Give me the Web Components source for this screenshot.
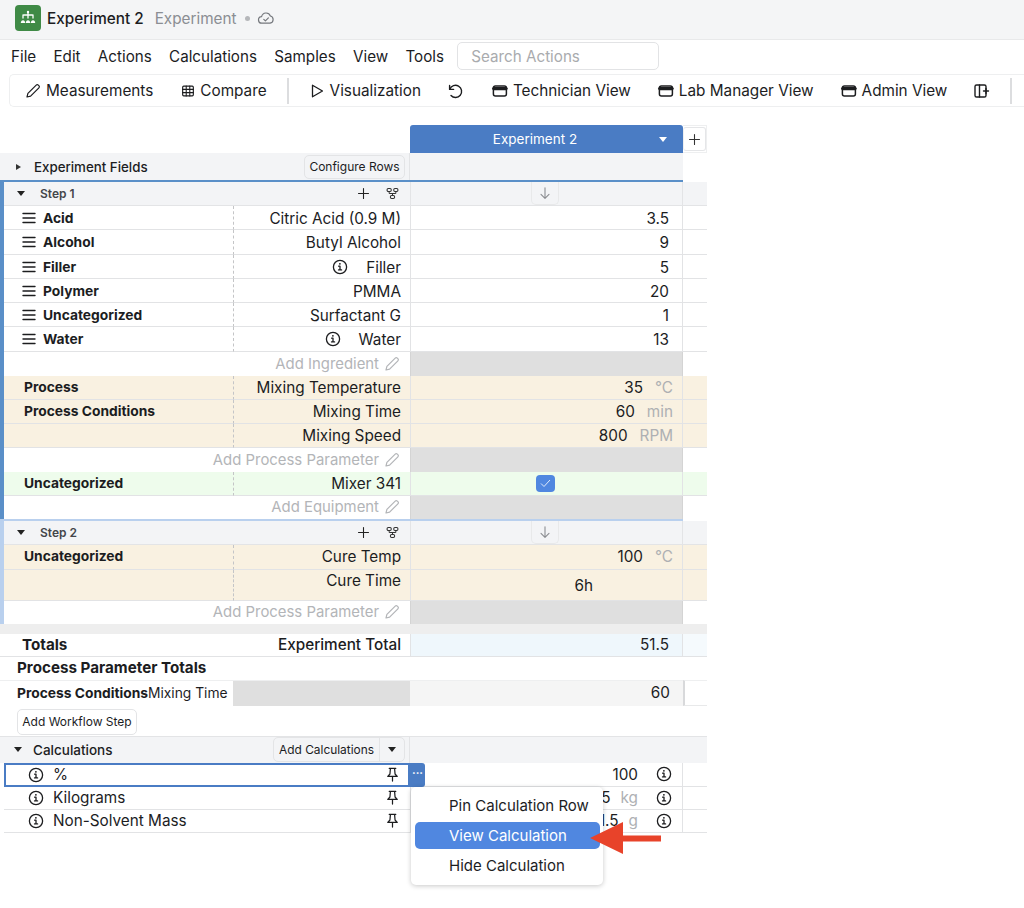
<!DOCTYPE html>
<html>
<head>
<meta charset="utf-8">
<title>Experiment 2</title>
<style>
  html, body { margin: 0; background: #fff; }
  body { font-family: Inter, "Liberation Sans", sans-serif; font-size: 15.3px; color: #1c1d1f; width: 1024px; height: 908px; overflow: hidden; }
  b { font-weight: 700; }
  .lbl { font-size: 13.8px; font-weight: 700; display: flex; align-items: center; }
  .val { display: flex; align-items: center; }
  .unit { color: #aeb0b3; margin-left: 12px; }
</style>
</head>
<body>
<app-header></app-header>
<menu-bar></menu-bar>
<tool-bar></tool-bar>
<sheet-view>
  <column-head></column-head>
  <fields-row></fields-row>

  <step-block color="#5a8fc8" line="#5a8fc8">
    <step-head label="Step 1" h="23"></step-head>
    <sheet-row h="24" nudge><span slot="a" class="lbl"><x-icon name="menu"></x-icon>Acid</span><span slot="b">Citric Acid (0.9 M)</span><span slot="c">3.5</span></sheet-row>
    <sheet-row h="25"><span slot="a" class="lbl"><x-icon name="menu"></x-icon>Alcohol</span><span slot="b">Butyl Alcohol</span><span slot="c">9</span></sheet-row>
    <sheet-row h="24" nudge><span slot="a" class="lbl"><x-icon name="menu"></x-icon>Filler</span><span slot="b" class="val"><x-icon name="info" gap="17"></x-icon>Filler</span><span slot="c">5</span></sheet-row>
    <sheet-row h="24" nudge><span slot="a" class="lbl"><x-icon name="menu"></x-icon>Polymer</span><span slot="b">PMMA</span><span slot="c">20</span></sheet-row>
    <sheet-row h="24" nudge><span slot="a" class="lbl"><x-icon name="menu"></x-icon>Uncategorized</span><span slot="b">Surfactant G</span><span slot="c">1</span></sheet-row>
    <sheet-row h="25"><span slot="a" class="lbl"><x-icon name="menu"></x-icon>Water</span><span slot="b" class="val"><x-icon name="info" gap="17"></x-icon>Water</span><span slot="c">13</span></sheet-row>
    <add-row label="Add Ingredient"></add-row>
    <sheet-row tone="process"><span slot="a" class="lbl">Process</span><span slot="b">Mixing Temperature</span><span slot="c">35<span class="unit">°C</span></span></sheet-row>
    <sheet-row tone="process"><span slot="a" class="lbl">Process Conditions</span><span slot="b">Mixing Time</span><span slot="c">60<span class="unit">min</span></span></sheet-row>
    <sheet-row tone="process"><span slot="b">Mixing Speed</span><span slot="c">800<span class="unit">RPM</span></span></sheet-row>
    <add-row label="Add Process Parameter"></add-row>
    <sheet-row tone="equip" h="23.5"><span slot="a" class="lbl">Uncategorized</span><span slot="b">Mixer 341</span><check-box slot="c"></check-box></sheet-row>
    <add-row label="Add Equipment" h="23"></add-row>
  </step-block>

  <step-block color="#b9d0ee" line="#b9d0ee">
    <step-head label="Step 2" h="23"></step-head>
    <sheet-row tone="process" h="25"><span slot="a" class="lbl">Uncategorized</span><span slot="b">Cure Temp</span><span slot="c">100<span class="unit">°C</span></span></sheet-row>
    <sheet-row tone="process" h="31" top><span slot="b">Cure Time</span><span slot="c" style="margin-right:80px;padding-top:2px">6h</span></sheet-row>
    <add-row label="Add Process Parameter" h="23"></add-row>
  </step-block>

  <totals-part></totals-part>

  <calc-head></calc-head>
  <calc-row label="%" value="100" active></calc-row>
  <calc-row label="Kilograms" value="5" unit="kg"></calc-row>
  <calc-row label="Non-Solvent Mass" value="1.5" unit="g"></calc-row>

  <pop-menu></pop-menu>
  <red-arrow></red-arrow>
</sheet-view>

<script>
const ICONS = {
  menu: '<path d="M3 4.5h12M3 9h12M3 13.5h12" stroke-width="1.4"/>',
  info: '<circle cx="9" cy="9" r="6.6" stroke-width="1.3"/><path d="M7.6 8.2H9v3.6M7.5 11.9h3.1" stroke-width="1.3"/><circle cx="8.9" cy="5.8" r=".9" fill="currentColor" stroke="none"/>',
  pencil: '<path d="M3 15l.9-3.6 8.3-8.3a1.5 1.5 0 0 1 2.1 0l.6.6a1.5 1.5 0 0 1 0 2.1l-8.3 8.3z" stroke-width="1.2"/>',
  table: '<rect x="3" y="3.5" width="12" height="11" rx="1.2" stroke-width="1.3"/><path d="M3 7.2h12M3 10.8h12M7 3.5v11M11 3.5v11" stroke-width="1.2"/>',
  play: '<path d="M4.5 3.2L14.5 9 4.5 14.8z" stroke-width="1.3"/>',
  undo: '<path d="M3.6 3.4v4h4" stroke-width="1.4"/><path d="M3.8 7.2A6.1 6.1 0 1 1 5 13.5" stroke-width="1.4"/>',
  view: '<rect x="2.4" y="4" width="13" height="10" rx="2" stroke-width="1.5"/><path d="M2.8 6.6h12.2" stroke-width="3.4"/>',
  panel: '<rect x="2" y="3" width="11" height="12" rx="1.6" stroke-width="1.4"/><path d="M6.5 3v12" stroke-width="1.4"/><path d="M10.5 9h5M13 6.500v5" stroke-width="1.4"/>',
  plus: '<path d="M9 3v12M3 9h12" stroke-width="1.3"/>',
  down: '<path d="M9 3v12M4.5 10.5L9 15l4.500-4.500" stroke-width="1.2"/>',
  nodes: '<rect x="2.5" y="3" width="5" height="3.6" rx="1.4" stroke-width="1.3"/><rect x="10.5" y="3" width="5" height="3.6" rx="1.4" stroke-width="1.3"/><rect x="6.5" y="11.4" width="5" height="3.6" rx="1.4" stroke-width="1.3"/><path d="M5 6.6v2.4h8V6.6M9 9v2.4" stroke-width="1.2"/>',
  pin: '<path d="M5.500 2.500h7M6.800 2.500l-.5 6-2.300 2.600h10l-2.300-2.600-.5-6M9 11.200V16" stroke-width="1.3"/>',
  cloud: '<path d="M5 14.2a3.3 3.3 0 0 1-.4-6.6 4.6 4.6 0 0 1 8.800-.6 3.700 3.700 0 0 1-.3 7.200z" stroke-width="1.2"/><path d="M6.800 10.400l1.600 1.500 3-3" stroke-width="1.2"/>',
  flow: '<path d="M5 6h8M9 3v3M4 6v3M14 6v3M9 6v3" stroke-width="1.3"/><path d="M2.400 13.500a1.700 2.600 0 0 1 3.200 0zM7.400 13.500a1.700 2.600 0 0 1 3.200 0zM12.400 13.500a1.700 2.600 0 0 1 3.200 0z" stroke-width="1.2" fill="currentColor"/><circle cx="9" cy="3" r="1.2" fill="currentColor" stroke="none"/>'
};

class XIcon extends HTMLElement {
  connectedCallback() {
    const name = this.getAttribute('name');
    const size = this.getAttribute('size') || 18;
    const gap = this.getAttribute('gap') || (name === 'menu' ? 5 : 0);
    this.attachShadow({ mode: 'open' }).innerHTML = `
      <style>
        :host { display: inline-flex; vertical-align: middle; margin-right: ${gap}px; }
        svg { display: block; fill: none; stroke: currentColor; stroke-linecap: round; stroke-linejoin: round; }
      </style>
      <svg width="${size}" height="${size}" viewBox="0 0 18 18">${ICONS[name]}</svg>`;
  }
}
customElements.define('x-icon', XIcon);

class AppHeader extends HTMLElement {
  constructor() {
    super();
    this.attachShadow({ mode: 'open' }).innerHTML = `
      <style>
        :host { display: flex; align-items: center; height: 36px; padding: 0 0 3px 15px; background: #f4f5f6; border-bottom: 1px solid #e8e9ea; font-size: 15.3px; }
        .logo { width: 26px; height: 26px; border-radius: 4px; background: #3f8a46; color: #fff; display: flex; align-items: center; justify-content: center; margin-right: 6px; }
        .name { font-weight: 500; color: #1c1d1f; margin-right: 11px; }
        .type { color: #8b8e93; }
        .dot { width: 5px; height: 5px; border-radius: 50%; background: #b5b7ba; margin: 0 7px 0 8px; }
        .cloud { color: #75787d; display: flex; }
      </style>
      <div class="logo"><x-icon name="flow" size="18"></x-icon></div>
      <span class="name">Experiment 2</span>
      <span class="type">Experiment</span>
      <span class="dot"></span>
      <span class="cloud"><x-icon name="cloud" size="18"></x-icon></span>`;
  }
}
customElements.define('app-header', AppHeader);

class MenuBar extends HTMLElement {
  constructor() {
    super();
    const items = ['File', 'Edit', 'Actions', 'Calculations', 'Samples', 'View', 'Tools'];
    this.attachShadow({ mode: 'open' }).innerHTML = `
      <style>
        :host { display: flex; align-items: center; height: 32px; padding: 0 0 2px 11px; gap: 17.3px; font-size: 15.2px; }
        .search { width: 187px; height: 26px; margin-left: -4px; border: 1px solid #e2e3e5; border-radius: 5px; padding-left: 13px; display: flex; align-items: center; color: #a9abae; }
      </style>
      ${items.map(i => `<span>${i}</span>`).join('')}
      <div class="search">Search Actions</div>`;
  }
}
customElements.define('menu-bar', MenuBar);

class ToolBar extends HTMLElement {
  constructor() {
    super();
    const btn = (icon, text, gap) => `<span class="btn" style="margin-right:${gap}px"><x-icon name="${icon}" size="${icon === 'table' ? 16 : 18}"></x-icon>${text ? `<span>${text}</span>` : ''}</span>`;
    this.attachShadow({ mode: 'open' }).innerHTML = `
      <style>
        :host { display: flex; align-items: center; height: 31px; margin-left: 9px; padding-left: 14px; border: 1px solid #eeeff0; border-right: 0; border-radius: 5px 0 0 5px; font-size: 15.3px; white-space: nowrap; overflow: hidden; }
        .btn { display: inline-flex; align-items: center; gap: 4px; }
        .sep { width: 2px; height: 26px; background: #dcdddf; flex: none; }
      </style>
      ${btn('pencil', 'Measurements', 27)}
      ${btn('table', 'Compare', 20)}
      <span class="sep" style="margin-right:19px"></span>
      ${btn('play', 'Visualization', 25)}
      ${btn('undo', '', 27)}
      ${btn('view', 'Technician View', 26)}
      ${btn('view', 'Lab Manager View', 26)}
      ${btn('view', 'Admin View', 26)}
      ${btn('panel', '', 19)}
      <span class="sep"></span>`;
  }
}
customElements.define('tool-bar', ToolBar);

class SheetView extends HTMLElement {
  constructor() {
    super();
    this.attachShadow({ mode: 'open' }).innerHTML = `
      <style>:host { display: block; position: relative; width: 707px; margin-top: 18px; }</style>
      <slot></slot>`;
  }
}
customElements.define('sheet-view', SheetView);

class ColumnHead extends HTMLElement {
  constructor() {
    super();
    this.attachShadow({ mode: 'open' }).innerHTML = `
      <style>
        :host { display: flex; height: 28px; padding-left: 410px; }
        .main { width: 273px; background: #4a7cc4; color: #fff; border-radius: 3px 3px 0 0; display: flex; align-items: center; justify-content: center; font-size: 13.5px; position: relative; padding-right: 23px; box-sizing: border-box; }
        .caret { position: absolute; right: 16px; top: 12px; border: 4.5px solid transparent; border-top: 5px solid #fff; border-bottom: 0; }
        .wrap { width: 24px; box-sizing: border-box; border: 1px solid #eeeff0; border-left: 0; display: flex; align-items: center; }
        .add { width: 23px; height: 24px; background: #fff; box-sizing: border-box; border: 1px solid #e5e6e8; border-left-color: #eeeff0; display: flex; align-items: center; justify-content: center; border-radius: 3px; color: #333; }
      </style>
      <div class="main">Experiment 2<span class="caret"></span></div>
      <div class="wrap"><div class="add"><x-icon name="plus" size="15"></x-icon></div></div>`;
  }
}
customElements.define('column-head', ColumnHead);

class FieldsRow extends HTMLElement {
  constructor() {
    super();
    this.attachShadow({ mode: 'open' }).innerHTML = `
      <style>
        :host { display: flex; width: 683px; height: 27px; background: #f3f4f6; font-size: 13.3px; font-weight: 500; }
        .left { width: 410px; display: flex; align-items: center; padding-left: 16px; box-sizing: border-box; border-right: 1px solid #e3e4e6; }
        .tri { width: 0; height: 0; border: 3.5px solid transparent; border-left: 5px solid #333; border-right: 0; margin-right: 13px; }
        .cfg { margin-left: auto; margin-right: 4px; height: 24px; width: 101px; box-sizing: border-box; border: 1px solid #e3e4e6; border-radius: 5px; display: flex; align-items: center; justify-content: center; font-size: 12px; font-weight: 400; }
      </style>
      <div class="left"><span class="tri"></span>Experiment Fields<span class="cfg">Configure Rows</span></div>`;
  }
}
customElements.define('fields-row', FieldsRow);

class StepBlock extends HTMLElement {
  constructor() {
    super();
    this.attachShadow({ mode: 'open' }).innerHTML = `
      <style>
        :host { display: block; border-left: 4px solid ${this.getAttribute('color')}; position: relative; }
        .line { height: 2px; width: 679px; background: ${this.getAttribute('line')}; }
      </style>
      <div class="line"></div><slot></slot>`;
  }
}
customElements.define('step-block', StepBlock);

class StepHead extends HTMLElement {
  connectedCallback() {
    this.attachShadow({ mode: 'open' }).innerHTML = `
      <style>
        :host { display: grid; grid-template-columns: 406px 273px 24px; height: ${this.getAttribute('h') || 23}px; background: #f3f4f6; border-bottom: 1px solid #e3e4e6; }
        .left { display: flex; align-items: center; padding-left: 13px; font-size: 12px; font-weight: 600; color: #44464a; }
        .caret { border: 4.5px solid transparent; border-top: 5px solid #222; border-bottom: 0; margin-right: 15px; }
        .plus { margin-left: auto; color: #222; margin-right: 14px; display: flex; }
        .nodes { margin-right: 10px; color: #333; display: flex; }
        .mid { border-left: 1px solid #e3e4e6; border-right: 1px solid #e3e4e6; display: flex; justify-content: center; padding-right: 4px; }
        .arrow { width: 26px; border: 1px solid #e8e9ea; border-top: 0; border-radius: 0 0 5px 5px; color: #8a8c90; display: flex; align-items: center; justify-content: center; }
      </style>
      <div class="left"><span class="caret"></span>${this.getAttribute('label')}<span class="plus"><x-icon name="plus" size="15"></x-icon></span><span class="nodes"><x-icon name="nodes" size="15"></x-icon></span></div>
      <div class="mid"><span class="arrow"><x-icon name="down" size="16"></x-icon></span></div>
      <div></div>`;
  }
}
customElements.define('step-head', StepHead);

class SheetRow extends HTMLElement {
  connectedCallback() {
    const top = this.hasAttribute('top');
    this.attachShadow({ mode: 'open' }).innerHTML = `
      <style>
        :host { display: grid; grid-template-columns: 229px 177px 273px 24px; height: ${this.getAttribute('h') || 24}px; font-size: 15.3px; }
        :host([tone=process]) { background: #f9f1e1; }
        :host([tone=equip]) { background: #eefcec; }
        .cell { display: flex; align-items: ${top ? 'flex-start' : 'center'}; box-sizing: border-box; border-bottom: 1px solid #e2e3e5; white-space: nowrap; min-width: 0; ${top ? 'padding-top: 1px;' : ''} }
        .a { padding-left: 20px; }
        :host(:not([tone])) .a { padding-left: 16px; }
        :host([tone=process]) .a { padding-bottom: 1px; }
        .b { justify-content: flex-end; padding-right: 9px; border-left: 1px dashed #c4c5c7; }
        .c { justify-content: flex-end; padding-right: 13px; border-left: 1px solid #e2e3e5; border-right: 1px solid #e2e3e5; }
        :host([nudge]) .b, :host([nudge]) .c { padding-top: 1px; }
        :host([tone=equip]) .c { justify-content: center; padding: 0; }
        :host([tone=process]) .c { padding-right: 9px; }
        :host([top]) .c { align-items: center; padding-top: 0; }
      </style>
      <div class="cell a"><slot name="a"></slot></div>
      <div class="cell b"><slot name="b"></slot></div>
      <div class="cell c"><slot name="c"></slot></div>
      <div class="cell d"></div>`;
  }
}
customElements.define('sheet-row', SheetRow);

class AddRow extends HTMLElement {
  connectedCallback() {
    this.attachShadow({ mode: 'open' }).innerHTML = `
      <style>
        :host { display: grid; grid-template-columns: 406px 273px; height: ${this.getAttribute('h') || 24}px; font-size: 14.9px; color: #b3b5b8; }
        .l { display: flex; align-items: center; justify-content: flex-end; gap: 4px; padding-right: 9px; }
        .r { background: #dfdfdf; border-left: 1px solid #d4d4d4; border-right: 1px solid #d4d4d4; }
      </style>
      <div class="l">${this.getAttribute('label')}<x-icon name="pencil" size="18"></x-icon></div>
      <div class="r"></div>`;
  }
}
customElements.define('add-row', AddRow);

class CheckBox extends HTMLElement {
  constructor() {
    super();
    this.attachShadow({ mode: 'open' }).innerHTML = `
      <style>
        :host { display: flex; width: 19px; height: 17px; margin-right: 2px; background: #5087e0; border-radius: 4px; align-items: center; justify-content: center; }
        svg { fill: none; stroke: #dfeafb; stroke-width: 1; }
      </style>
      <svg width="11" height="9" viewBox="0 0 11 9"><path d="M1 4.500l3 3 6-6.500"/></svg>`;
  }
}
customElements.define('check-box', CheckBox);

class TotalsPart extends HTMLElement {
  constructor() {
    super();
    this.attachShadow({ mode: 'open' }).innerHTML = `
      <style>
        :host { display: block; }
        .gap { height: 10px; background: #eeeeee; }
        .row { display: grid; grid-template-columns: 410px 273px 24px; height: 22px; border-bottom: 1px solid #e2e3e5; font-size: 15.3px; font-weight: 500; }
        .row > div { display: flex; align-items: center; }
        .t { justify-content: space-between; padding: 0 9px 0 22px; }
        .t b { font-size: 15.2px; }
        .v { background: #eff7fc; border-left: 1px solid #e2e3e5; border-right: 1px solid #e2e3e5; justify-content: flex-end; padding-right: 13px; font-weight: 400; }
        .e { background: #f5fafd; }
        .h { height: 21px; padding: 0 0 2px 17px; font-size: 15.2px; font-weight: 700; display: flex; align-items: center; }
        .pc { display: grid; grid-template-columns: 233px 177px 273px 24px; height: 26px; }
        .pc > div { display: flex; align-items: center; box-sizing: border-box; border-top: 1px solid #eeeff0; padding-bottom: 1px; }
        .n { padding-left: 17px; font-size: 13.8px; white-space: nowrap; }
        .n b { font-weight: 700; }
        .g { background: #dfdfdf; }
        .w { background: #f5f5f5; justify-content: flex-end; padding-right: 13px; font-size: 15.3px; }
        .x { border-left: 2px solid #d8d9db; border-bottom: 1px solid #e8e9ea; }
        .add { height: 27px; padding: 3px 0 0 17px; display: flex; align-items: flex-start; }
        .add span { display: flex; align-items: center; justify-content: center; width: 120px; height: 26px; box-sizing: border-box; border: 1px solid #e3e4e6; border-radius: 5px; font-size: 12px; }
      </style>
      <div class="gap"></div>
      <div class="row"><div class="t"><b>Totals</b><span>Experiment Total</span></div><div class="v">51.5</div><div class="e"></div></div>
      <div class="h">Process Parameter Totals</div>
      <div class="pc"><div class="n"><b>Process Conditions</b>Mixing Time</div><div class="g"></div><div class="w">60</div><div class="x"></div></div>
      <div class="add"><span>Add Workflow Step</span></div>`;
  }
}
customElements.define('totals-part', TotalsPart);

class CalcHead extends HTMLElement {
  constructor() {
    super();
    this.attachShadow({ mode: 'open' }).innerHTML = `
      <style>
        :host { display: grid; grid-template-columns: 410px 297px; height: 27px; background: #f3f4f6; border-top: 1px solid #e3e4e6; box-sizing: border-box; font-size: 13.5px; font-weight: 500; }
        .l { display: flex; align-items: center; padding-left: 14px; border-right: 1px solid #e3e4e6; }
        .caret { border: 4.5px solid transparent; border-top: 5px solid #222; border-bottom: 0; margin-right: 11px; }
        .btn { margin-left: auto; margin-right: 4px; display: flex; height: 25px; box-sizing: border-box; border: 1px solid #e3e4e6; border-radius: 5px; font-size: 11.9px; font-weight: 400; align-items: center; }
        .btn span { padding: 0 5px; line-height: 23px; }
        .btn i { width: 24px; height: 23px; border-left: 1px solid #e3e4e6; display: flex; align-items: center; justify-content: center; }
        .btn i::after { content: ''; border: 4.5px solid transparent; border-top: 5px solid #222; border-bottom: 0; }
      </style>
      <div class="l"><span class="caret"></span>Calculations<span class="btn"><span>Add Calculations</span><i></i></span></div><div></div>`;
  }
}
customElements.define('calc-head', CalcHead);

class CalcRow extends HTMLElement {
  connectedCallback() {
    const unit = this.getAttribute('unit');
    const active = this.hasAttribute('active');
    this.attachShadow({ mode: 'open' }).innerHTML = `
      <style>
        :host { display: grid; grid-template-columns: 406px 273px 24px; margin-left: 4px; height: ${active ? 24 : 23}px; font-size: 15.3px; position: relative; }
        .cell { display: flex; align-items: center; box-sizing: border-box; border-bottom: 1px solid #e2e3e5; }
        .a { padding-left: 23px; gap: 8px; ${active ? 'outline: 2px solid #4a7cc4; outline-offset: -2px; border: 0;' : ''} }
        .pin { margin-left: auto; margin-right: 9px; display: flex; }
        .c { justify-content: flex-end; padding-right: 9px; border-left: 1px solid #e2e3e5; border-right: 1px solid #e2e3e5; }
        .c x-icon { margin-left: 17px; }
        .unit { color: #aeb0b3; margin-left: 10px; }
        .dots { position: absolute; left: 406px; top: 0; width: 15px; height: 24px; background: #4a7cc4; border-radius: 0 3px 3px 0; color: #fff; font-size: 11px; font-weight: 700; line-height: 21px; text-align: center; }
      </style>
      <div class="cell a"><x-icon name="info"></x-icon><span>${this.getAttribute('label')}</span><span class="pin"><x-icon name="pin" size="17"></x-icon></span></div>
      <div class="cell c"><span>${this.getAttribute('value')}</span>${unit ? `<span class="unit">${unit}</span>` : ''}<x-icon name="info"></x-icon></div>
      <div class="cell d"></div>
      ${active ? '<div class="dots">···</div>' : ''}`;
  }
}
customElements.define('calc-row', CalcRow);

class PopMenu extends HTMLElement {
  constructor() {
    super();
    this.attachShadow({ mode: 'open' }).innerHTML = `
      <style>
        :host { position: absolute; left: 411px; top: 662px; width: 192px; height: 98px; box-sizing: border-box; background: #fff; border-radius: 5px; box-shadow: 0 1px 5px rgba(0,0,0,.22); padding: 4px; font-size: 15px; }
        div { height: 29px; display: flex; align-items: center; padding-left: 34px; border-radius: 5px; width: 185px; box-sizing: border-box; }
        .on { background: #5087e0; color: #fff; height: 27px; margin: 2px 0; }
      </style>
      <div>Pin Calculation Row</div><div class="on">View Calculation</div><div>Hide Calculation</div>`;
  }
}
customElements.define('pop-menu', PopMenu);

class RedArrow extends HTMLElement {
  constructor() {
    super();
    this.attachShadow({ mode: 'open' }).innerHTML = `
      <style>:host { position: absolute; left: 589px; top: 696px; display: block; } svg { display: block; }</style>
      <svg width="74" height="34" viewBox="0 0 74 34"><path d="M1 17L34 1v13.500h38v6H34V33z" fill="#e8432a"/></svg>`;
  }
}
customElements.define('red-arrow', RedArrow);
</script>
</body>
</html>
